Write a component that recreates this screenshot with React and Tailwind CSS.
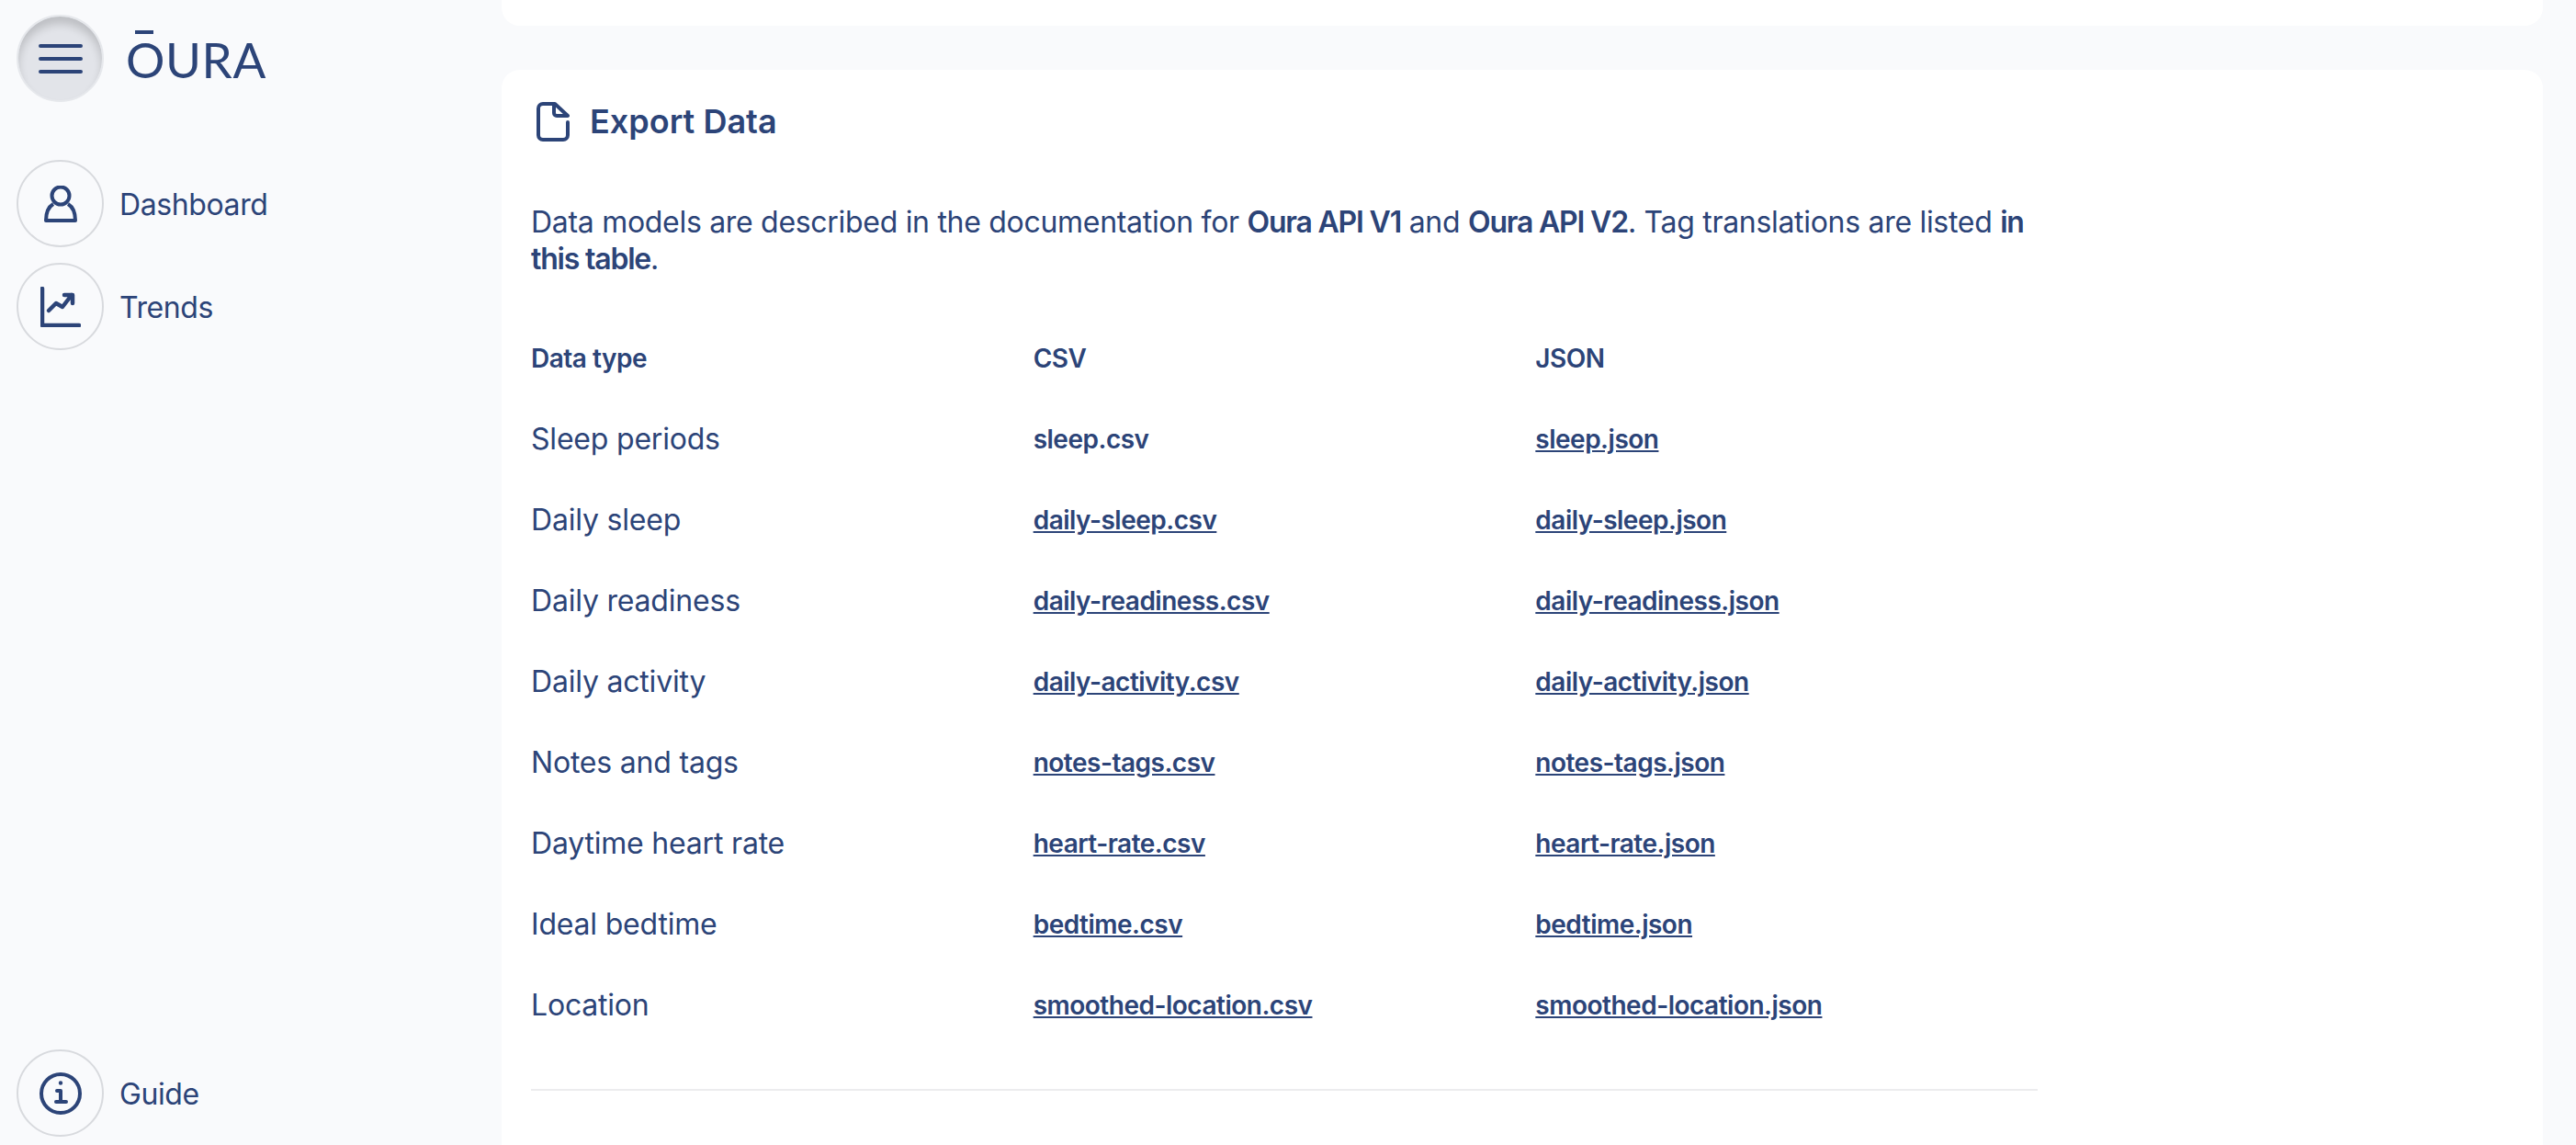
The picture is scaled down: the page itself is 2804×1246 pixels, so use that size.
import React from 'react';

const rows = [
  { name: 'Sleep periods', csv: 'sleep.csv', json: 'sleep.json', plain: true },
  { name: 'Daily sleep', csv: 'daily-sleep.csv', json: 'daily-sleep.json' },
  { name: 'Daily readiness', csv: 'daily-readiness.csv', json: 'daily-readiness.json' },
  { name: 'Daily activity', csv: 'daily-activity.csv', json: 'daily-activity.json' },
  { name: 'Notes and tags', csv: 'notes-tags.csv', json: 'notes-tags.json' },
  { name: 'Daytime heart rate', csv: 'heart-rate.csv', json: 'heart-rate.json' },
  { name: 'Ideal bedtime', csv: 'bedtime.csv', json: 'bedtime.json' },
  { name: 'Location', csv: 'smoothed-location.csv', json: 'smoothed-location.json' },
];

function NavItem({ label, children }) {
  return (
    <a className="flex items-center gap-[17px] text-[32px] leading-none tracking-[-0.4px]">
      <span className="flex h-[95px] w-[95px] items-center justify-center rounded-full border-2 border-[#d8dade]">
        {children}
      </span>
      <span className="pt-[2px]">{label}</span>
    </a>
  );
}

export default function App() {
  return (
    <div className="flex h-screen overflow-hidden bg-[#f9fafc] text-[#2c4478] font-['Inter',sans-serif]">
      <aside className="flex w-[546px] shrink-0 flex-col justify-between pb-[9px] pl-[18px] pt-[16px]">
        <div>
          <div className="flex items-center gap-[24px]">
            <button className="flex h-[95px] w-[95px] items-center justify-center rounded-full border-2 border-[#e6e8ec] bg-[#e2e4e9] shadow-[inset_0_8px_10px_rgba(0,0,0,0.16)]">
              <svg width="48" height="32" viewBox="0 0 48 32" fill="none" stroke="#2c4478" strokeWidth="4" strokeLinecap="round">
                <path d="M2 2h44M2 16h44M2 30h44" />
              </svg>
            </button>
            <span className="relative mt-[2px] font-['Lato',sans-serif] text-[53px] font-normal leading-none tracking-[0.6px]">
              OURA
              <span className="absolute left-[10px] top-[-5px] h-[4px] w-[20px] bg-[#2c4478]" />
            </span>
          </div>
          <nav className="mt-[63px] flex flex-col gap-[17px]">
            <NavItem label="Dashboard">
              <svg width="36" height="40" viewBox="0 0 36 40" fill="none" stroke="#2c4478" strokeWidth="4" strokeLinejoin="round">
                <circle cx="18" cy="11" r="9.5" />
                <path d="M10 20C5 23 2 30 2 38h32c0-8-3-15-8-18" />
              </svg>
            </NavItem>
            <NavItem label="Trends">
              <svg width="44" height="44" viewBox="0 0 44 44" fill="none" stroke="#2c4478" strokeWidth="4.5" strokeLinecap="round" strokeLinejoin="round">
                <path d="M2 2v40h40" />
                <path d="M9 26l8-8 7 4 10-13M26 9h9v9" />
              </svg>
            </NavItem>
          </nav>
        </div>
        <NavItem label="Guide">
          <svg width="48" height="48" viewBox="0 0 48 48" fill="none" stroke="#2c4478" strokeWidth="4" strokeLinecap="round" strokeLinejoin="round">
            <circle cx="24" cy="24" r="21" />
            <path d="M20 21h4v12M19 33h11" />
            <circle cx="24" cy="12.5" r="1.2" fill="#2c4478" strokeWidth="2" />
          </svg>
        </NavItem>
      </aside>

      <main className="flex flex-1 flex-col gap-[48px] pr-[36px]">
        <div className="h-[28px] shrink-0 rounded-b-[20px] bg-white" />
        <section className="flex-1 rounded-t-[20px] bg-white pl-[32px] pt-[35px]">
          <div className="flex items-center gap-[22px] pl-[6px]">
            <svg width="36" height="44" viewBox="0 0 36 44" fill="none" stroke="#2c4478" strokeWidth="4" strokeLinejoin="round" strokeLinecap="round">
              <path d="M34 22v14a5 5 0 0 1-5 5H7a5 5 0 0 1-5-5V7a5 5 0 0 1 5-5h13l14 13H22a3 3 0 0 1-3-3V2" />
            </svg>
            <h2 className="pb-[2px] text-[36px] font-semibold leading-none">Export Data</h2>
          </div>
          <div className="w-[1640px]">
            <p className="mt-[67px] text-[32px] leading-[40px] tracking-[-0.3px]">
              Data models are described in the documentation for <b className="font-semibold tracking-[-1.2px]">Oura API V1</b> and{' '}
              <b className="font-semibold tracking-[-1.2px]">Oura API V2</b>. Tag translations are listed{' '}
              <b className="font-semibold tracking-[-1.2px]">in this table</b>.
            </p>
            <div className="mt-[44px] grid grid-cols-3 auto-rows-[88px] items-center text-[28px] tracking-[-0.5px]">
              <div className="font-semibold">Data type</div>
              <div className="font-semibold">CSV</div>
              <div className="font-semibold">JSON</div>
              {rows.map((r) => (
                <React.Fragment key={r.name}>
                  <div className="text-[32px] tracking-[-0.2px]">{r.name}</div>
                  <a className={r.plain ? 'font-semibold' : 'font-semibold underline'}>{r.csv}</a>
                  <a className="font-semibold underline">{r.json}</a>
                </React.Fragment>
              ))}
            </div>
            <hr className="mt-[47px] border-t-2 border-[#ececee]" />
          </div>
        </section>
      </main>
    </div>
  );
}
